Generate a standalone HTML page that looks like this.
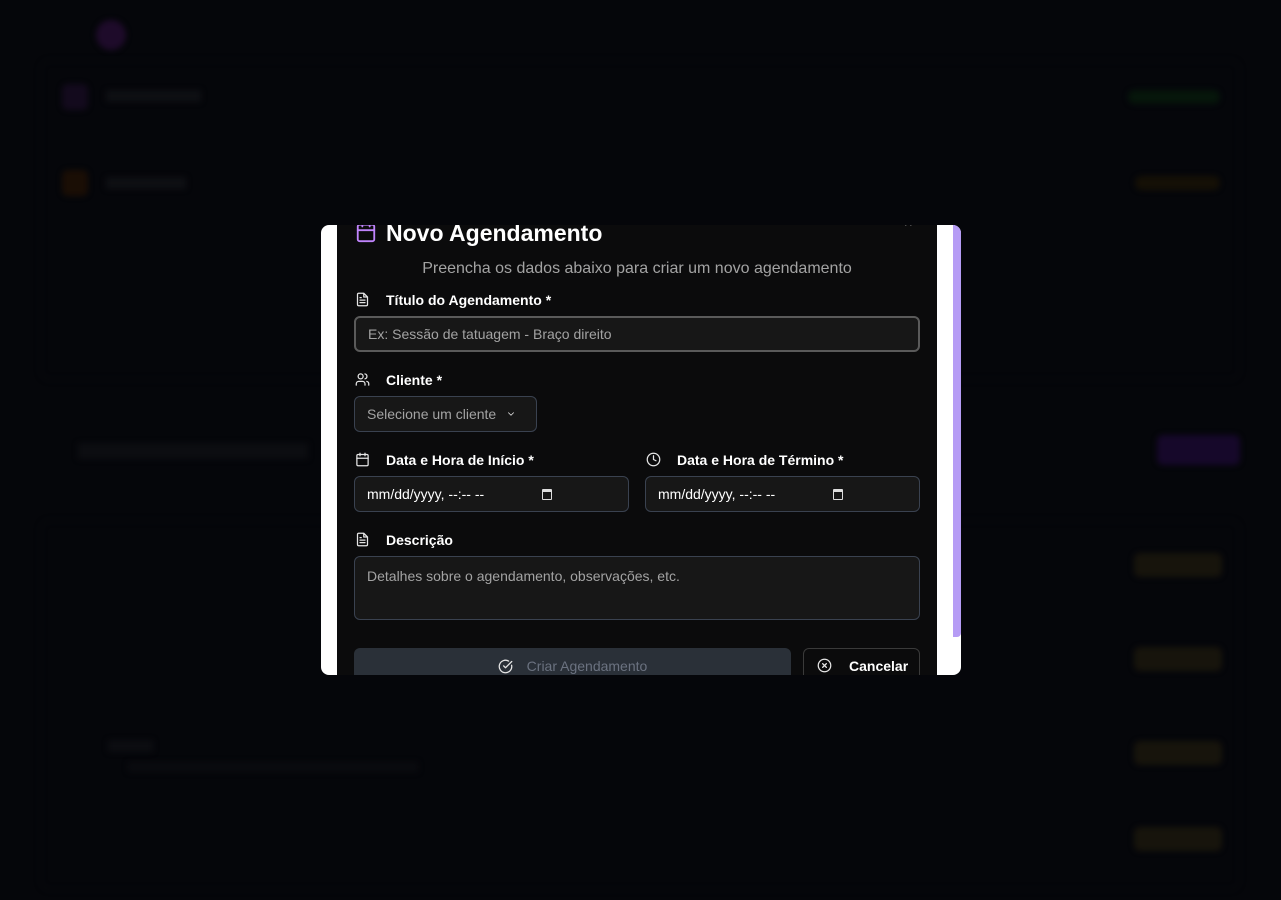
<!DOCTYPE html>
<html><head><meta charset="utf-8"><style>
*{box-sizing:border-box;margin:0;padding:0}
body{width:1281px;height:900px;background:#05060a;font-family:"Liberation Sans",sans-serif;overflow:hidden;position:relative}
.bg{position:absolute;filter:blur(3px)}
.modal{position:absolute;left:321px;top:225px;width:640px;height:450px;background:#fff;border-radius:8px;overflow:hidden}
.inner{position:absolute;left:16px;top:0;width:600px;height:450px;background:#0b0b0c}
.sb{position:absolute;left:632px;top:0;width:8px;height:412px;background:#b69cf5;border-radius:0 4px 4px 0}
.a{position:absolute}
.lbl{position:absolute;font-size:14px;font-weight:bold;color:#fff}
.inp{position:absolute;background:#171717;border:1px solid #3a4250;border-radius:6px;color:#a3a3a3;font-size:14px;padding-left:12px;display:flex;align-items:center}
svg{position:absolute;fill:none;stroke:#e5e5e5;stroke-width:2;stroke-linecap:round;stroke-linejoin:round}
.cal{display:inline-block;width:10px;height:11px;border:1.5px solid #ddd;border-top-width:3px;border-radius:1px}
</style></head><body>
<div class="bg" style="left:40px;top:60px;width:1200px;height:320px;border:1px solid #0a0b10;border-radius:10px"></div>
<div class="bg" style="left:62px;top:84px;width:26px;height:26px;background:#130a1d;border-radius:6px"></div>
<div class="bg" style="left:106px;top:90px;width:95px;height:12px;background:#0e0f13"></div>
<div class="bg" style="left:1128px;top:90px;width:92px;height:14px;background:#06160b;border-radius:8px"></div>
<div class="bg" style="left:62px;top:170px;width:26px;height:26px;background:#1a0e05;border-radius:6px"></div>
<div class="bg" style="left:106px;top:177px;width:80px;height:12px;background:#0e0f13"></div>
<div class="bg" style="left:1135px;top:176px;width:85px;height:14px;background:#151006;border-radius:8px"></div>
<div class="bg" style="left:96px;top:20px;width:30px;height:30px;background:#1e0b2a;border-radius:50%"></div>
<div class="bg" style="left:1157px;top:435px;width:83px;height:30px;background:#16082a;border-radius:6px"></div>
<div class="bg" style="left:78px;top:443px;width:230px;height:16px;background:#0c0d11"></div>
<div class="bg" style="left:40px;top:520px;width:1200px;height:370px;border:1px solid #0a0b10;border-radius:10px"></div>
<div class="bg" style="left:1134px;top:553px;width:88px;height:24px;background:#17140c;border-radius:6px"></div>
<div class="bg" style="left:1134px;top:647px;width:88px;height:24px;background:#17140c;border-radius:6px"></div>
<div class="bg" style="left:1134px;top:741px;width:88px;height:24px;background:#17140c;border-radius:6px"></div>
<div class="bg" style="left:1134px;top:827px;width:88px;height:24px;background:#17140c;border-radius:6px"></div>
<div class="bg" style="left:108px;top:740px;width:45px;height:12px;background:#0c0d11"></div>
<div class="bg" style="left:128px;top:762px;width:290px;height:10px;background:#0a0b0f"></div>

<div class="modal">
<div class="inner">
<svg style="left:18px;top:-4px" width="22" height="22" viewBox="0 0 24 24" stroke="#c084fc"><rect x="3" y="4" width="18" height="18" rx="2" stroke="#c084fc"/><path d="M3 10h18M8 2v4M16 2v4" stroke="#c084fc"/></svg>
<div class="a" style="left:49px;top:-5px;font-size:23px;font-weight:bold;color:#fff">Novo Agendamento</div>
<div class="a" style="left:0;width:600px;top:35px;text-align:center;font-size:16px;color:#a3a3a3">Preencha os dados abaixo para criar um novo agendamento</div>
<div class="a" style="left:568px;top:-8px;color:#aaa;font-size:14px">^</div>

<svg style="left:18px;top:67px" width="15" height="15" viewBox="0 0 24 24"><path d="M14 2H6a2 2 0 0 0-2 2v16a2 2 0 0 0 2 2h12a2 2 0 0 0 2-2V8z M14 2v6h6 M16 13H8 M16 17H8 M10 9H8"/></svg>
<div class="lbl" style="left:49px;top:67px">Título do Agendamento *</div>
<div class="inp" style="left:17px;top:91px;width:566px;height:36px;border:2px solid #5a5a5a">Ex: Sessão de tatuagem - Braço direito</div>

<svg style="left:18px;top:147px" width="15" height="15" viewBox="0 0 24 24"><circle cx="9" cy="7" r="4"/><path d="M16 21v-2a4 4 0 0 0-4-4H6a4 4 0 0 0-4 4v2 M16 3.1a4 4 0 0 1 0 7.8 M22 21v-2a4 4 0 0 0-3-3.9"/></svg>
<div class="lbl" style="left:49px;top:147px">Cliente *</div>
<div class="inp" style="left:17px;top:171px;width:183px;height:36px">Selecione um cliente <svg style="position:static;margin-left:10px" width="10" height="10" viewBox="0 0 24 24" stroke="#a3a3a3"><path d="M6 9l6 6 6-6"/></svg></div>

<svg style="left:18px;top:227px" width="15" height="15" viewBox="0 0 24 24"><rect x="3" y="4" width="18" height="18" rx="2"/><path d="M3 10h18M8 2v4M16 2v4"/></svg>
<div class="lbl" style="left:49px;top:227px">Data e Hora de Início *</div>
<div class="inp" style="left:17px;top:251px;width:275px;height:36px;color:#fff">mm/dd/yyyy, --:-- --<span class="cal" style="margin-left:58px"></span></div>
<svg style="left:309px;top:227px" width="15" height="15" viewBox="0 0 24 24"><circle cx="12" cy="12" r="10"/><path d="M12 6v6l4 2"/></svg>
<div class="lbl" style="left:340px;top:227px">Data e Hora de Término *</div>
<div class="inp" style="left:308px;top:251px;width:275px;height:36px;color:#fff">mm/dd/yyyy, --:-- --<span class="cal" style="margin-left:58px"></span></div>

<svg style="left:18px;top:307px" width="15" height="15" viewBox="0 0 24 24"><path d="M14 2H6a2 2 0 0 0-2 2v16a2 2 0 0 0 2 2h12a2 2 0 0 0 2-2V8z M14 2v6h6 M16 13H8 M16 17H8 M10 9H8"/></svg>
<div class="lbl" style="left:49px;top:307px">Descrição</div>
<div class="inp" style="left:17px;top:331px;width:566px;height:64px;align-items:flex-start;padding-top:11px">Detalhes sobre o agendamento, observações, etc.</div>

<div class="a" style="left:17px;top:423px;width:437px;height:40px;background:#2a3038;border-radius:6px;color:#6b7280;font-size:14px;text-align:center;line-height:36px">
<svg style="position:static;vertical-align:-3px;margin-right:14px" width="15" height="15" viewBox="0 0 24 24" stroke="#6b7280"><path d="M21.8 10A10 10 0 1 1 17 3.3"/><path d="M9 11l3 3L22 4"/></svg>Criar Agendamento</div>
<div class="a" style="left:466px;top:423px;width:117px;height:40px;border:1px solid #3a3a3a;border-radius:6px;color:#fff;font-size:14px;font-weight:bold;line-height:34px;padding-left:45px">Cancelar</div>
<svg style="left:480px;top:433px" width="15" height="15" viewBox="0 0 24 24"><circle cx="12" cy="12" r="10"/><path d="M15 9l-6 6M9 9l6 6"/></svg>
</div>
<div class="sb"></div>
</div>
</body></html>
